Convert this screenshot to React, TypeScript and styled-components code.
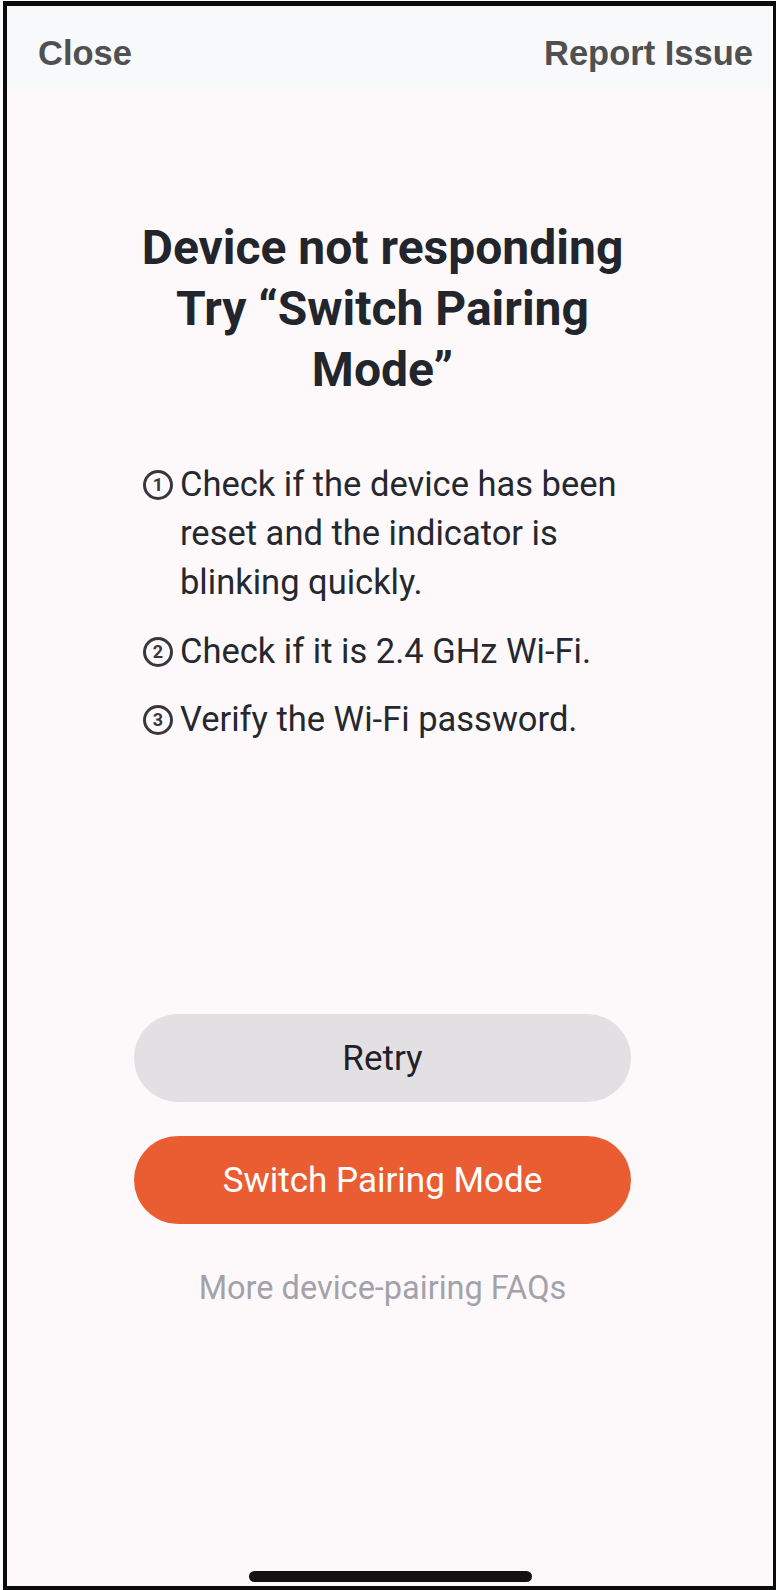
import React from 'react';
import styled, { createGlobalStyle } from 'styled-components';

const GlobalStyle = createGlobalStyle`
  html, body {
    margin: 0;
    padding: 0;
    background: #ffffff;
  }
  * {
    box-sizing: border-box;
  }
`;

const Outer = styled.div`
  padding: 1px 0 0 3px;
`;

const Frame = styled.div`
  width: 773px;
  height: 1589px;
  border-style: solid;
  border-color: #0b0b0b;
  border-width: 5px 3px 4px 4px;
  background: #fdf9fa;
  display: flex;
  flex-direction: column;
  font-family: Roboto, 'Noto Sans', sans-serif;
`;

const Header = styled.header`
  height: 83px;
  background: #f8f9fa;
  display: flex;
  justify-content: space-between;
  align-items: flex-start;
  padding: 28px 20px 0 31px;
`;

const HeaderLink = styled.span`
  font-family: 'Liberation Sans', Arial, sans-serif;
  font-weight: 700;
  font-size: 34.5px;
  line-height: 38px;
  color: #505050;
`;

const Main = styled.main`
  display: flex;
  flex-direction: column;
  align-items: center;
  padding-right: 15px;
  flex: 1;
`;

const Title = styled.h1`
  margin: 128px 0 0;
  width: 540px;
  text-align: center;
  font-size: 48px;
  line-height: 61px;
  font-weight: 700;
  color: #22252c;
`;

const Steps = styled.ol`
  list-style: none;
  margin: 60px 0 0;
  padding: 0 9px;
  width: 497px;
  display: flex;
  flex-direction: column;
  gap: 19.5px;
`;

const Step = styled.li`
  display: flex;
  align-items: flex-start;
  font-size: 34.5px;
  line-height: 49px;
  color: #25282e;
`;

const Num = styled.span`
  flex: none;
  width: 30px;
  height: 30px;
  margin: 10px 7px 0 0;
  border: 3px solid #38383a;
  border-radius: 50%;
  display: flex;
  align-items: center;
  justify-content: center;
  font-size: 18px;
  line-height: 1;
  font-weight: 700;
  color: #38383a;
`;

const Actions = styled.div`
  margin-top: 270px;
  width: 497px;
  display: flex;
  flex-direction: column;
  align-items: center;
  gap: 34px;
`;

const Pill = styled.button<{ $primary?: boolean }>`
  width: 100%;
  height: 88px;
  border: none;
  border-radius: 44px;
  background: ${(p) => (p.$primary ? '#ea5d33' : '#e3e0e3')};
  color: ${(p) => (p.$primary ? '#ffffff' : '#1e2127')};
  font-family: Roboto, 'Noto Sans', sans-serif;
  font-size: 35px;
  font-weight: 400;
  cursor: pointer;
`;

const FaqLink = styled.a`
  margin-top: 10px;
  font-size: 32.5px;
  line-height: 40px;
  color: #a3a2ab;
  text-decoration: none;
`;

const HomeArea = styled.div`
  display: flex;
  justify-content: center;
  padding-bottom: 4px;
`;

const HomeBar = styled.div`
  width: 283px;
  height: 11px;
  border-radius: 6px;
  background: #111111;
`;

const steps = [
  'Check if the device has been reset and the indicator is blinking quickly.',
  'Check if it is 2.4 GHz Wi-Fi.',
  'Verify the Wi-Fi password.',
];

export default function App() {
  return (
    <Outer>
      <GlobalStyle />
      <Frame>
        <Header>
          <HeaderLink>Close</HeaderLink>
          <HeaderLink>Report Issue</HeaderLink>
        </Header>
        <Main>
          <Title>
            Device not responding
            <br />
            Try “Switch Pairing Mode”
          </Title>
          <Steps>
            {steps.map((s, i) => (
              <Step key={i}>
                <Num>{i + 1}</Num>
                <span>{s}</span>
              </Step>
            ))}
          </Steps>
          <Actions>
            <Pill>Retry</Pill>
            <Pill $primary>Switch Pairing Mode</Pill>
            <FaqLink href="#">More device-pairing FAQs</FaqLink>
          </Actions>
        </Main>
        <HomeArea>
          <HomeBar />
        </HomeArea>
      </Frame>
    </Outer>
  );
}
